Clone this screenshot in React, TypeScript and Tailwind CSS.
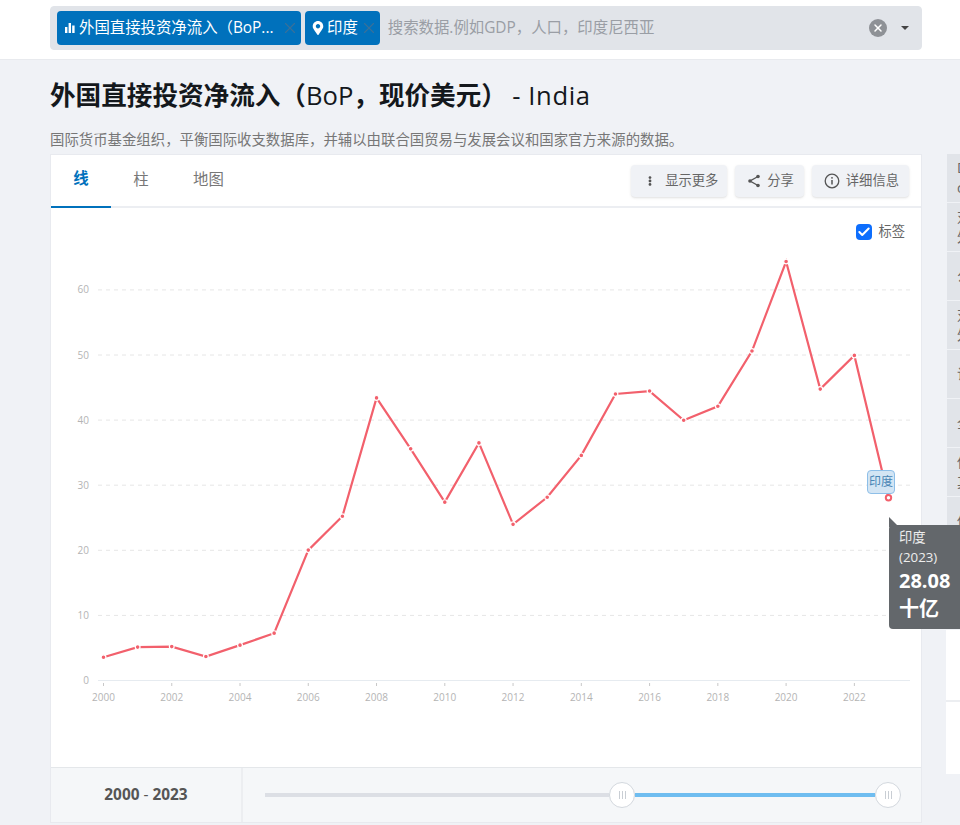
import { Check, X } from "lucide-react";
import { FaMapMarkerAlt, FaEllipsisV } from "react-icons/fa";

const data = [3.58, 5.13, 5.21, 3.68, 5.43, 7.27, 20.03, 25.23, 43.41, 35.58, 27.4, 36.5, 23.99, 28.15, 34.58, 44.01, 44.46, 39.97, 42.12, 50.61, 64.36, 44.76, 49.94, 28.08];
const px = (i: number) => 103.5 + i * 34.13;
const py = (v: number) => 680.5 - v * 6.51;
const points = data.map((v, i) => `${px(i)},${py(v)}`).join(" ");

const fontStack = { fontFamily: '"Open Sans", "Noto Sans CJK SC", sans-serif' };

function Chart() {
  return (
    <svg viewBox="51 208 870 559" className="block h-[559px] w-full">
      {[10, 20, 30, 40, 50, 60].map((v) => (
        <line key={v} x1={98} x2={911} y1={py(v)} y2={py(v)} stroke="#e6e6e6" strokeWidth={1} strokeDasharray="4 4" />
      ))}
      <line x1={98} x2={910} y1={680.5} y2={680.5} stroke="#e6ebf0" strokeWidth={1} />
      {[0, 10, 20, 30, 40, 50, 60].map((v) => (
        <text key={v} x={89} y={py(v) + 3.5} textAnchor="end" fontSize={10} fill="#b4b4b4">{v}</text>
      ))}
      {Array.from({ length: 12 }, (_, k) => k * 2).map((i) => (
        <g key={i}>
          <line x1={px(i)} x2={px(i)} y1={683} y2={686} stroke="#c8c8c8" />
          <text x={px(i)} y={700.5} textAnchor="middle" fontSize={10} fill="#b4b4b4">{2000 + i}</text>
        </g>
      ))}
      <polyline points={points} fill="none" stroke="#f2606c" strokeWidth={2.2} />
      {data.slice(0, -1).map((v, i) => (
        <circle key={i} cx={px(i)} cy={py(v)} r={2.4} fill="#f2606c" stroke="#ffffff" strokeWidth={1.2} />
      ))}
      <circle cx={px(23)} cy={py(28.08)} r={2.7} fill="#ffffff" stroke="#f2606c" strokeWidth={2} />
    </svg>
  );
}

function Bars() {
  return (
    <svg viewBox="0 0 10 10" className="h-2.5 w-2.5 shrink-0 fill-white">
      <rect x="0" y="4" width="2.4" height="6" />
      <rect x="3.6" y="0" width="2.4" height="10" />
      <rect x="7.2" y="2.5" width="2.4" height="7.5" />
    </svg>
  );
}

function Share() {
  return (
    <svg viewBox="0 0 14 14" className="h-3.5 w-3.5 fill-[#555555] stroke-[#555555]">
      <path d="M11 2.5 3 7l8 4.5" fill="none" strokeWidth="1.4" />
      <circle cx="11" cy="2.5" r="1.8" stroke="none" />
      <circle cx="3" cy="7" r="1.8" stroke="none" />
      <circle cx="11" cy="11.5" r="1.8" stroke="none" />
    </svg>
  );
}

function Info() {
  return (
    <svg viewBox="0 0 16 16" className="h-4 w-4 fill-none stroke-[#555555]">
      <circle cx="8" cy="8" r="6.8" strokeWidth="1.3" />
      <path d="M8 7v4.5" strokeWidth="1.5" />
      <circle cx="8" cy="4.8" r="0.9" className="fill-[#555555]" stroke="none" />
    </svg>
  );
}

function Handle() {
  return (
    <div className="flex h-6.5 w-6.5 shrink-0 items-center justify-center gap-0.5 rounded-full border border-[#d3d8de] bg-white">
      <span className="h-2 w-px bg-[#c9ced4]" />
      <span className="h-2 w-px bg-[#c9ced4]" />
      <span className="h-2 w-px bg-[#c9ced4]" />
    </div>
  );
}

const buttonClass = "flex h-8 items-center rounded-sm bg-[#f0f2f6] text-[13.3px] text-[#666666] shadow-sm";

const sideRows = [
  ["D", "c"],
  ["对", "外"],
  ["公"],
  ["对", "外"],
  ["访"],
  ["全"],
  ["低", "其"],
  ["低"],
  ["高"],
];

export default function App() {
  return (
    <div className="h-[825px] w-[960px] overflow-hidden bg-[#f0f2f6]" style={fontStack}>
      <header className="h-15 border-b border-[#e8eaee] bg-white pt-1.5">
        <div className="ml-[50px] flex h-11 w-[872px] items-center rounded-sm border border-[#e1e4e9] bg-[#e1e4e9] pl-1.5 text-[15.4px]">
          <div className="flex h-8.5 w-61 items-center rounded-sm bg-[#0071bc] pl-2 pr-0.5 text-white">
            <Bars />
            <span className="ml-1 flex-1 truncate">外国直接投资净流入（BoP...</span>
            <X className="h-4.5 w-4.5 text-[#3a7099]" strokeWidth={1.5} />
          </div>
          <div className="ml-1 flex h-8.5 items-center rounded-sm bg-[#0071bc] pl-1.5 pr-0.5 text-white">
            <FaMapMarkerAlt className="h-3.5 w-3.5" />
            <span className="ml-0.5">印度</span>
            <X className="ml-0.5 h-4.5 w-4.5 text-[#3a7099]" strokeWidth={1.5} />
          </div>
          <span className="ml-2 flex-1 text-[#9a9ea5]">搜索数据.例如GDP，人口，印度尼西亚</span>
          <div className="flex h-4.5 w-4.5 items-center justify-center rounded-full bg-[#8e9196]">
            <X className="h-3 w-3 text-white" strokeWidth={3} />
          </div>
          <div className="ml-3.5 mr-3 h-0 w-0 border-x-4 border-t-4 border-x-transparent border-t-[#444444]" />
        </div>
      </header>

      <div className="ml-[50px] flex items-start">
        <main className="w-[872px] shrink-0">
          <h1 className="mt-4 text-[25.6px] leading-10 text-[#14181c]">
            <span className="font-bold">外国直接投资净流入（</span>
            <span>BoP</span>
            <span className="font-bold">，现价美元）</span>
            <span className="-ml-0.5 tracking-wide"> - India</span>
          </h1>
          <p className="mt-3.5 text-[14.4px] leading-5 text-[#777777]">国际货币基金组织，平衡国际收支数据库，并辅以由联合国贸易与发展会议和国家官方来源的数据。</p>

          <section className="mt-1 border border-[#e8eaef] bg-white">
            <div className="flex h-[53px] items-start justify-between border-b-2 border-[#eceef2]">
              <div className="flex h-[53px] text-[15.4px] text-[#777777]">
                <div className="flex w-15 items-center justify-center border-b-2 border-[#0071bc] pb-1 font-bold text-[#0071bc]">线</div>
                <div className="flex w-15 items-center justify-center pb-1">柱</div>
                <div className="flex items-center px-5.5 pb-1">地图</div>
              </div>
              <div className="flex gap-2 pr-3 pt-2.5">
                <div className={`${buttonClass} w-24 pl-3.5`}>
                  <FaEllipsisV className="h-2.5 w-2.5 text-[#555555]" />
                  <span className="ml-2.5">显示更多</span>
                </div>
                <div className={`${buttonClass} pl-3 pr-2.5`}>
                  <Share />
                  <span className="ml-1.5">分享</span>
                </div>
                <div className={`${buttonClass} pl-3 pr-2.5`}>
                  <Info />
                  <span className="ml-1.5">详细信息</span>
                </div>
              </div>
            </div>

            <div className="relative">
              <Chart />
              <div className="absolute right-4 top-3.5 flex items-center gap-1.5 text-[13.3px] text-[#666666]">
                <div className="flex h-4 w-4 items-center justify-center rounded-sm bg-[#0d6efd]">
                  <Check className="h-3.5 w-3.5 text-white" strokeWidth={3.5} />
                </div>
                标签
              </div>
              <div className="absolute left-[816px] top-[262px] flex h-6 items-center rounded-sm border border-[#8ebfe8] bg-[#d3e5f4] px-px text-xs text-[#4a86b5]">印度</div>
              <div className="absolute left-[838px] top-[317px] z-10 w-24 rounded-sm bg-[#63676b] pb-1.5 pl-2.5 pt-0.5 text-[#eeeeee]">
                <svg viewBox="0 0 10 10" className="absolute -top-2 left-0 h-2.5 w-2.5 fill-[#63676b]">
                  <path d="M0 0 L10 10 L0 10Z" />
                </svg>
                <div className="text-[13.3px] leading-5">印度</div>
                <div className="text-[13.3px] leading-5">(2023)</div>
                <div className="text-xl font-bold leading-7 text-white">28.08</div>
                <div className="text-xl font-bold leading-7 text-white">十亿</div>
              </div>
            </div>

            <div className="flex h-[55px] items-stretch border-t border-[#e4e7ea] bg-[#f5f7f9]">
              <div className="flex w-48 items-center justify-center border-r-2 border-[#eceef1] text-[15.4px] font-bold text-[#555555]">
                2000 <span className="mx-1 font-normal">-</span> 2023
              </div>
              <div className="flex flex-1 items-center pl-5.5 pr-5">
                <div className="h-1 flex-1 bg-[#dcdfe5]" />
                <Handle />
                <div className="h-1 w-60 bg-[#6fbdf0]" />
                <Handle />
              </div>
            </div>
          </section>
        </main>

        <aside className="ml-6 mt-[94px] w-40 shrink-0 pl-px text-sm text-[#666666]">
          <div className="flex flex-col gap-px">
            {sideRows.map((row, i) => (
              <div key={i} className="flex h-12 flex-col justify-center bg-[#e1e4e9] pl-2.5 leading-5">
                {row.map((t) => (
                  <span key={t}>{t}</span>
                ))}
              </div>
            ))}
          </div>
          <div className="-ml-px mt-9 h-18 border-b-2 border-[#eceef1] bg-white" />
          <div className="-ml-px h-18 bg-white" />
        </aside>
      </div>
    </div>
  );
}
